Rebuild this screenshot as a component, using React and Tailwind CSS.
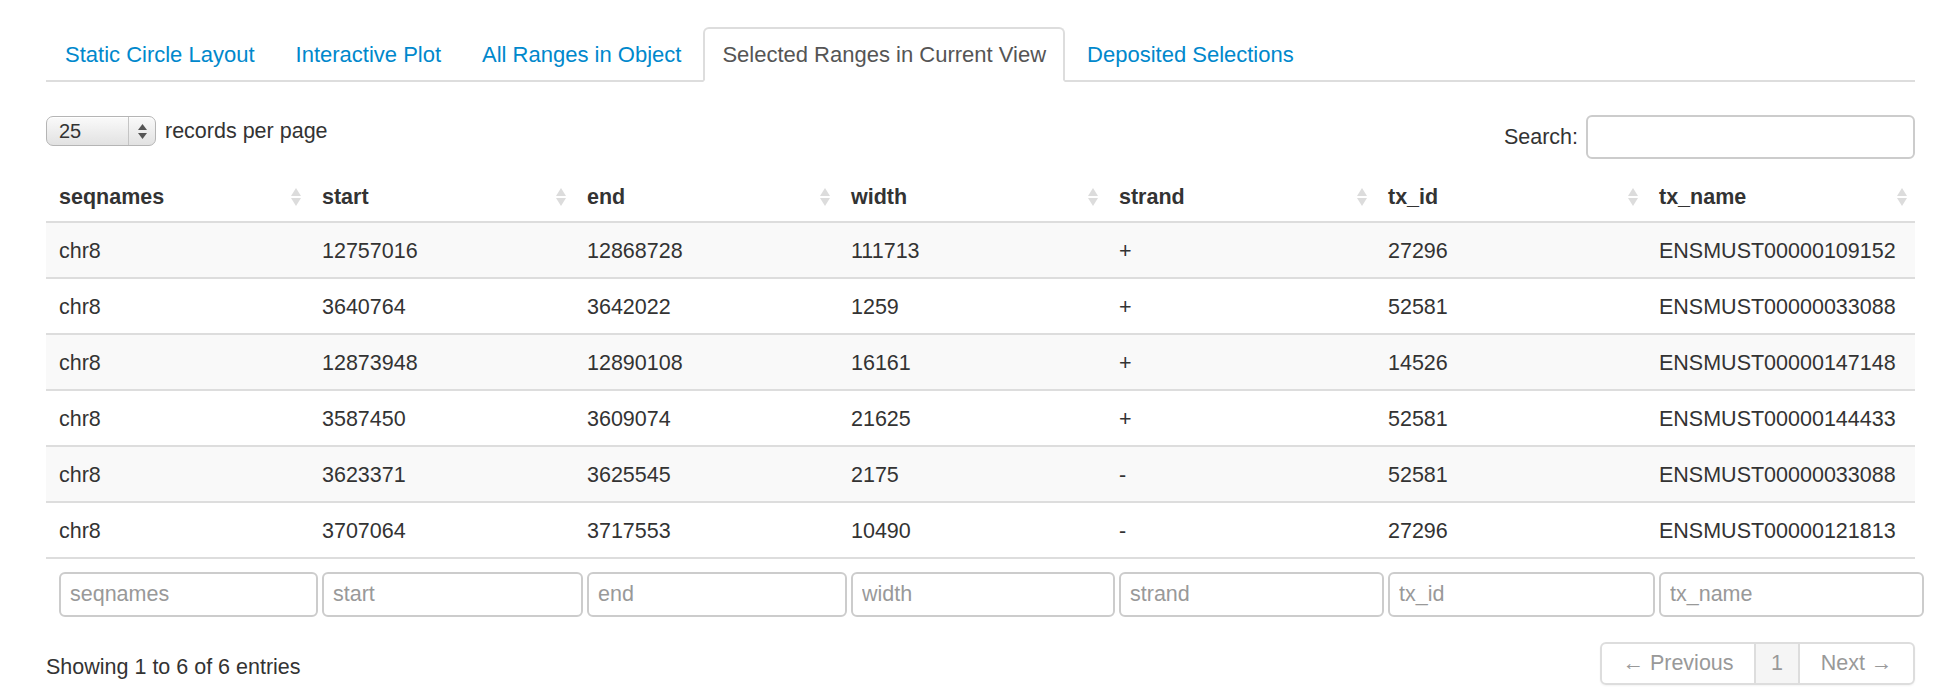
import React from "react";

const tabs = [
  { label: "Static Circle Layout" },
  { label: "Interactive Plot" },
  { label: "All Ranges in Object" },
  { label: "Selected Ranges in Current View", active: true },
  { label: "Deposited Selections" },
];

const columns = [
  { name: "seqnames", w: "w-[263px]" },
  { name: "start", w: "w-[265px]" },
  { name: "end", w: "w-[264px]" },
  { name: "width", w: "w-[268px]" },
  { name: "strand", w: "w-[269px]" },
  { name: "tx_id", w: "w-[271px]" },
  { name: "tx_name", w: "w-[269px]" },
];

const rows = [
  ["chr8", "12757016", "12868728", "111713", "+", "27296", "ENSMUST00000109152"],
  ["chr8", "3640764", "3642022", "1259", "+", "52581", "ENSMUST00000033088"],
  ["chr8", "12873948", "12890108", "16161", "+", "14526", "ENSMUST00000147148"],
  ["chr8", "3587450", "3609074", "21625", "+", "52581", "ENSMUST00000144433"],
  ["chr8", "3623371", "3625545", "2175", "-", "52581", "ENSMUST00000033088"],
  ["chr8", "3707064", "3717553", "10490", "-", "27296", "ENSMUST00000121813"],
];

// both-way sort marker from datatables
function SortBoth() {
  return (
    <svg width="12" height="20" viewBox="0 0 12 20" className="shrink-0">
      <polygon points="6,1 11,9 1,9" fill="#dcdcdc" />
      <polygon points="1,11 11,11 6,19" fill="#dcdcdc" />
    </svg>
  );
}

export default function App() {
  return (
    <div className="font-['Liberation_Sans',Arial,sans-serif] text-[#333] bg-white min-h-[692px] pt-[27px] pl-[46px]">
      <div className="w-[1869px]">
        {/* tabs */}
        <ul className="flex border-b-2 border-[#ddd] h-[55px]">
          {tabs.map((t) => (
            <li
              key={t.label}
              className={
                t.active
                  ? "mb-[-2px] mr-[3px] h-[55px] px-[17px] border-2 border-[#ddd] border-b-white bg-white rounded-t-[6px] flex items-center text-[22px] text-[#555]"
                  : "mb-[-2px] mr-[3px] h-[55px] px-[17px] border-2 border-transparent flex items-center text-[22px] text-[#0088cc]"
              }
            >
              {t.label}
            </li>
          ))}
        </ul>

        {/* length + search */}
        <div className="flex justify-between items-start mt-[33px] text-[21.5px]">
          <div className="flex items-center mt-[1px]">
            <div className="flex w-[110px] h-[30px] rounded-[7px] border border-[#b5b5b5] bg-gradient-to-b from-[#fafafa] to-[#e2e2e2] shadow-[inset_0_1px_0_#fff]">
              <div className="flex-1 pl-[12px] flex items-center text-[20px] leading-none">25</div>
              <div className="w-[27px] border-l border-[#c4c4c4] flex flex-col items-center justify-center gap-[3px]">
                <svg width="9" height="6" viewBox="0 0 9 6"><polygon points="4.5,0 9,6 0,6" fill="#555" /></svg>
                <svg width="9" height="6" viewBox="0 0 9 6"><polygon points="0,0 9,0 4.5,6" fill="#555" /></svg>
              </div>
            </div>
            <span className="ml-[9px] leading-[26px]">records per page</span>
          </div>
          <div className="flex items-center">
            <span className="leading-[26px]">Search:</span>
            <input className="ml-[8px] w-[329px] h-[44px] rounded-[6px] border-2 border-[#ccc] outline-none px-[10px]" />
          </div>
        </div>

        {/* table */}
        <table className="table-fixed w-[1869px] border-collapse mt-[8px] text-[21.5px]">
          <colgroup>
            {columns.map((c) => (
              <col key={c.name} className={c.w} />
            ))}
          </colgroup>
          <thead>
            <tr className="border-b-2 border-[#ddd]">
              {columns.map((c) => (
                <th key={c.name} className="text-left font-bold pl-[13px] pt-[17px] pb-[11px] leading-[26px]">
                  <div className="flex items-center justify-between pr-[7px]">
                    <span>{c.name}</span>
                    <SortBoth />
                  </div>
                </th>
              ))}
            </tr>
          </thead>
          <tbody>
            {rows.map((r, i) => (
              <tr key={i} className={i % 2 === 0 ? "bg-[#f9f9f9] border-b-2 border-[#ddd]" : "bg-white border-b-2 border-[#ddd]"}>
                {r.map((v, j) => (
                  <td key={j} className="pl-[13px] pt-[15px] pb-[13px] leading-[26px] whitespace-nowrap">
                    {v}
                  </td>
                ))}
              </tr>
            ))}
          </tbody>
          <tfoot>
            <tr>
              {columns.map((c) => (
                <td key={c.name} className="pl-[13px] pr-0 pt-[13px] pb-0">
                  <input
                    placeholder={c.name}
                    className="block w-[calc(100%+9px)] h-[45px] rounded-[6px] border-2 border-[#ccc] px-[9px] text-[21.5px] text-[#555] placeholder:text-[#999] outline-none"
                  />
                </td>
              ))}
            </tr>
          </tfoot>
        </table>

        {/* info + pagination */}
        <div className="flex justify-between items-start mt-[25px] text-[21.5px]">
          <div className="mt-[12px] leading-[26px]">Showing 1 to 6 of 6 entries</div>
          <div className="flex h-[43px] rounded-[6px] border-2 border-[#ddd] shadow-[0_1px_2px_rgba(0,0,0,0.05)] text-[#999] overflow-hidden">
            <div className="w-[152px] flex items-center justify-center">← Previous</div>
            <div className="w-[46px] flex items-center justify-center bg-[#f5f5f5] border-x-2 border-[#ddd]">1</div>
            <div className="w-[113px] flex items-center justify-center">Next →</div>
          </div>
        </div>
      </div>
    </div>
  );
}
